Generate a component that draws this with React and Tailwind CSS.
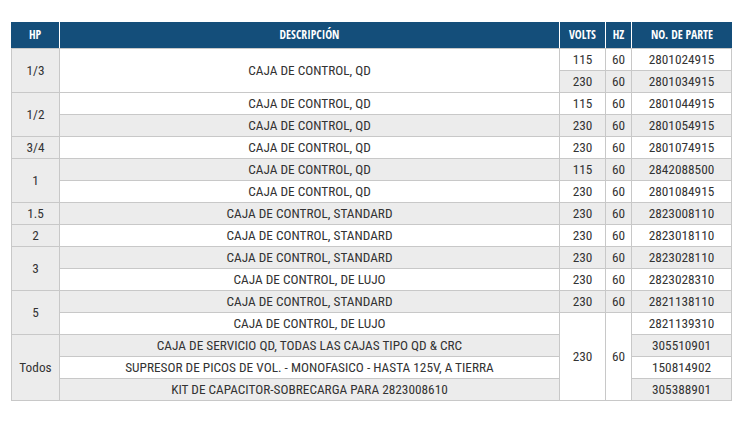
import React from "react";

const W = "bg-white";
const G = "bg-[#ececec]";

function C({ children, bg, span = "" }) {
  return (
    <div className={`flex items-center justify-center text-center leading-none ${bg} ${span}`}>
      {children}
    </div>
  );
}

export default function App() {
  return (
    <div className="w-[743px] h-[434px] bg-white pt-[22px] pl-[11px] font-['Roboto_Condensed','Liberation_Sans',sans-serif] text-[#333333]">
      <div className="w-[721px]">
        <div className="flex h-[26px] gap-px bg-white font-['Open_Sans_Condensed','Roboto_Condensed',sans-serif] text-[11.7px] font-bold uppercase text-white">
          <div className="w-[48px] bg-[#144e7a] flex items-center justify-center">HP</div>
          <div className="w-[499px] bg-[#144e7a] flex items-center justify-center">DESCRIPCIÓN</div>
          <div className="w-[45px] bg-[#144e7a] flex items-center justify-center">VOLTS</div>
          <div className="w-[25px] bg-[#144e7a] flex items-center justify-center">HZ</div>
          <div className="w-[100px] bg-[#144e7a] flex items-center justify-center">NO. DE PARTE</div>
        </div>
        <div className="grid grid-cols-[47px_499px_45px_25px_99px] grid-rows-[repeat(16,21px)] gap-px bg-[#c8c8c8] p-px text-[13.3px]">
          {/* row 1 */}
          <C bg={G} span="row-span-2">1/3</C>
          <C bg={W} span="row-span-2">CAJA DE CONTROL, QD</C>
          <C bg={W}>115</C>
          <C bg={W}>60</C>
          <C bg={W}>2801024915</C>
          {/* row 2 */}
          <C bg={G}>230</C>
          <C bg={G}>60</C>
          <C bg={G}>2801034915</C>
          {/* row 3 */}
          <C bg={G} span="row-span-2">1/2</C>
          <C bg={W}>CAJA DE CONTROL, QD</C>
          <C bg={W}>115</C>
          <C bg={W}>60</C>
          <C bg={W}>2801044915</C>
          {/* row 4 */}
          <C bg={G}>CAJA DE CONTROL, QD</C>
          <C bg={G}>230</C>
          <C bg={G}>60</C>
          <C bg={G}>2801054915</C>
          {/* row 5 */}
          <C bg={G}>3/4</C>
          <C bg={W}>CAJA DE CONTROL, QD</C>
          <C bg={W}>230</C>
          <C bg={W}>60</C>
          <C bg={W}>2801074915</C>
          {/* row 6 */}
          <C bg={G} span="row-span-2">1</C>
          <C bg={G}>CAJA DE CONTROL, QD</C>
          <C bg={G}>115</C>
          <C bg={G}>60</C>
          <C bg={G}>2842088500</C>
          {/* row 7 */}
          <C bg={W}>CAJA DE CONTROL, QD</C>
          <C bg={W}>230</C>
          <C bg={W}>60</C>
          <C bg={W}>2801084915</C>
          {/* row 8 */}
          <C bg={G}>1.5</C>
          <C bg={G}>CAJA DE CONTROL, STANDARD</C>
          <C bg={G}>230</C>
          <C bg={G}>60</C>
          <C bg={G}>2823008110</C>
          {/* row 9 */}
          <C bg={G}>2</C>
          <C bg={W}>CAJA DE CONTROL, STANDARD</C>
          <C bg={W}>230</C>
          <C bg={W}>60</C>
          <C bg={W}>2823018110</C>
          {/* row 10 */}
          <C bg={G} span="row-span-2">3</C>
          <C bg={G}>CAJA DE CONTROL, STANDARD</C>
          <C bg={G}>230</C>
          <C bg={G}>60</C>
          <C bg={G}>2823028110</C>
          {/* row 11 */}
          <C bg={W}>CAJA DE CONTROL, DE LUJO</C>
          <C bg={W}>230</C>
          <C bg={W}>60</C>
          <C bg={W}>2823028310</C>
          {/* row 12 */}
          <C bg={G} span="row-span-2">5</C>
          <C bg={G}>CAJA DE CONTROL, STANDARD</C>
          <C bg={G}>230</C>
          <C bg={G}>60</C>
          <C bg={G}>2821138110</C>
          {/* row 13 */}
          <C bg={W}>CAJA DE CONTROL, DE LUJO</C>
          <C bg={W} span="row-span-4">230</C>
          <C bg={W} span="row-span-4">60</C>
          <C bg={W}>2821139310</C>
          {/* row 14 */}
          <C bg={G} span="row-span-3">Todos</C>
          <C bg={G}>CAJA DE SERVICIO QD, TODAS LAS CAJAS TIPO QD &amp; CRC</C>
          <C bg={G}>305510901</C>
          {/* row 15 */}
          <C bg={W}>SUPRESOR DE PICOS DE VOL. - MONOFASICO - HASTA 125V, A TIERRA</C>
          <C bg={W}>150814902</C>
          {/* row 16 */}
          <C bg={G}>KIT DE CAPACITOR-SOBRECARGA PARA 2823008610</C>
          <C bg={G}>305388901</C>
        </div>
      </div>
    </div>
  );
}
